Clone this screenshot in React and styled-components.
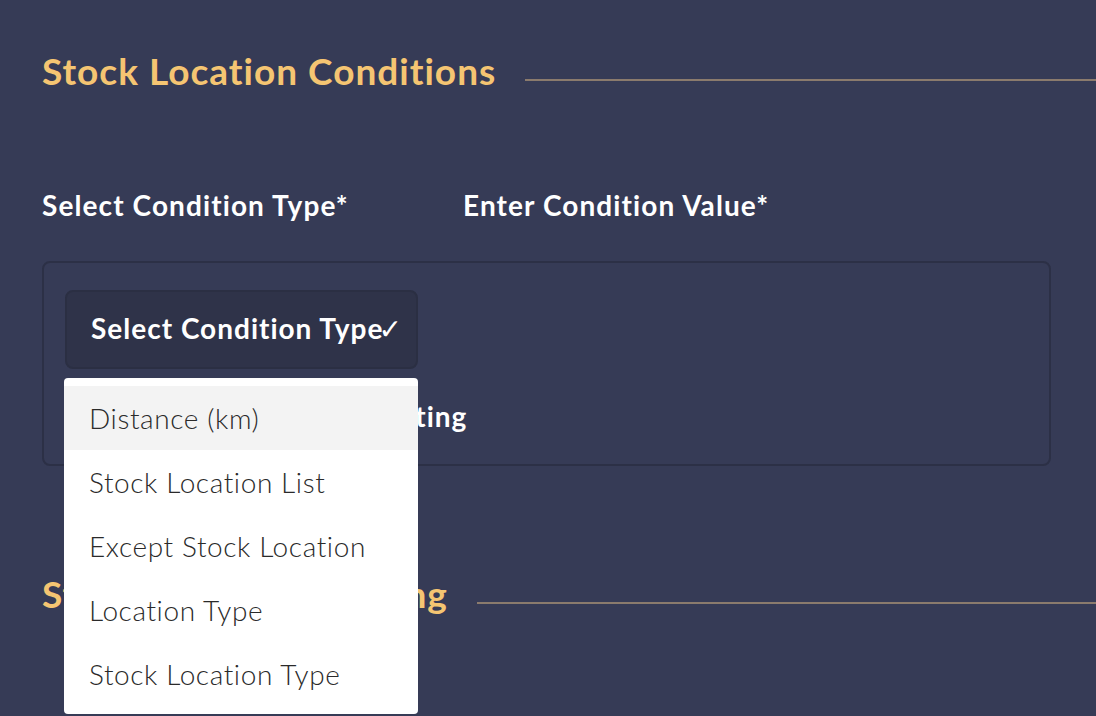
import React from "react";
import styled, { createGlobalStyle } from "styled-components";

const options = [
  "Distance (km)",
  "Stock Location List",
  "Except Stock Location",
  "Location Type",
  "Stock Location Type",
];

const App = () => {
  return (
    <Page>
      <GlobalStyle />
      <Section>
        <HeadingRow>
          <Heading>Stock Location Conditions</Heading>
          <Rule />
        </HeadingRow>
        <LabelRow>
          <FieldLabel>Select Condition Type*</FieldLabel>
          <FieldLabel>Enter Condition Value*</FieldLabel>
        </LabelRow>
        <Card>
          <SelectWrap>
            <SelectButton>
              Select Condition Type<Check>✓</Check>
            </SelectButton>
            <Menu>
              {options.map((o, i) => (
                <MenuItem key={o} $active={i === 0}>
                  {o}
                </MenuItem>
              ))}
            </Menu>
          </SelectWrap>
          <CardLabel>Enable Sorting</CardLabel>
        </Card>
      </Section>
      <Section $second>
        <HeadingRow>
          <Heading>Stock Location Ranking</Heading>
          <Rule />
        </HeadingRow>
      </Section>
    </Page>
  );
};

//styled

const GlobalStyle = createGlobalStyle`
  body {
    margin: 0;
    background: #363b56;
    font-family: Lato, "Open Sans", sans-serif;
    overflow: hidden;
  }
`;

const Page = styled.div`
  min-height: 716px;
  background: #363b56;
  overflow: hidden;
`;

const Section = styled.div`
  padding: ${(p) => (p.$second ? "106px 0 0 42px" : "49px 0 0 42px")};
`;

const HeadingRow = styled.div`
  display: flex;
  align-items: center;
`;

const Heading = styled.h2`
  margin: 0;
  font-size: 37px;
  font-weight: 700;
  line-height: 44px;
  letter-spacing: 1px;
  color: #f5c572;
  white-space: nowrap;
`;

const Rule = styled.div`
  flex: 1;
  height: 2px;
  margin: 18px 0 0 29px;
  background: #8b7b6d;
`;

const LabelRow = styled.div`
  display: grid;
  grid-template-columns: 421px auto;
  margin-top: 95px;
`;

const FieldLabel = styled.div`
  font-size: 28px;
  font-weight: 700;
  line-height: 34px;
  letter-spacing: 1.1px;
  color: #ffffff;
  white-space: nowrap;
`;

const Card = styled.div`
  margin-top: 39px;
  width: 1005px;
  height: 201px;
  border: 2px solid #2c3046;
  border-radius: 8px;
  display: flex;
  flex-direction: column;
  align-items: flex-start;
`;

const SelectWrap = styled.div`
  position: relative;
  margin: 27px 0 0 21px;
`;

const SelectButton = styled.div`
  display: flex;
  align-items: center;
  box-sizing: border-box;
  width: 353px;
  height: 79px;
  padding: 0 0 4px 24px;
  background: #2f3349;
  border: 2px solid #2b2f43;
  border-radius: 8px;
  color: #ffffff;
  font-size: 28px;
  font-weight: 700;
  letter-spacing: 1px;
  white-space: nowrap;
`;

const Check = styled.span`
  font-family: "DejaVu Sans", sans-serif;
  font-size: 28px;
  font-weight: 400;
  line-height: 1;
  margin: 4px 0 0 -5px;
`;

const Menu = styled.div`
  position: absolute;
  top: 88px;
  left: -1px;
  width: 354px;
  padding: 8px 0;
  background: #ffffff;
  border-radius: 4px;
  z-index: 2;
`;

const MenuItem = styled.div`
  height: 64px;
  display: flex;
  align-items: center;
  padding-left: 25px;
  font-size: 28px;
  font-weight: 300;
  letter-spacing: 0.6px;
  color: #2a2a2a;
  background: ${(p) => (p.$active ? "#f3f3f3" : "#ffffff")};
`;

const CardLabel = styled.div`
  margin: 30px 0 0 229px;
  font-size: 28px;
  font-weight: 700;
  line-height: 34px;
  letter-spacing: 1px;
  color: #ffffff;
  white-space: nowrap;
`;

export default App;
